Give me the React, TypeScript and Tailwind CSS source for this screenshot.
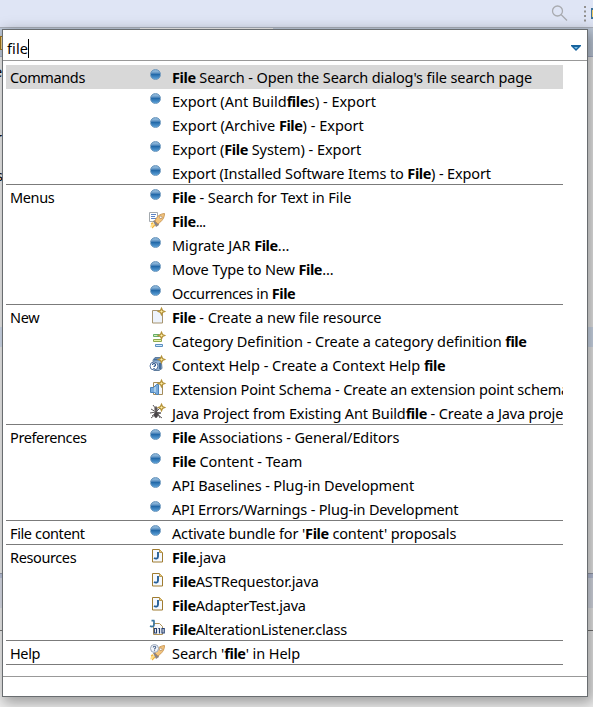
import React from "react";

type IconName = "dot" | "rocket" | "helpRocket" | "newFile" | "category" | "context" | "schema" | "ant" | "java" | "class";
type Item = { icon: IconName; text: string; track?: string };
type Group = { name: string; items: Item[] };

// Text between asterisks is the matched part and is drawn bold.
const groups: Group[] = [
  { name: "Commands", items: [
    { icon: "dot", text: "*File* Search - Open the Search dialog's file search page", track: "tracking-[-0.105px]" },
    { icon: "dot", text: "Export (Ant Build*file*s) - Export", track: "tracking-[-0.010px]" },
    { icon: "dot", text: "Export (Archive *File*) - Export", track: "tracking-[0.010px]" },
    { icon: "dot", text: "Export (*File* System) - Export", track: "tracking-[-0.060px]" },
    { icon: "dot", text: "Export (Installed Software Items to *File*) - Export", track: "tracking-[-0.125px]" },
  ] },
  { name: "Menus", items: [
    { icon: "dot", text: "*File* - Search for Text in File", track: "tracking-[-0.040px]" },
    { icon: "rocket", text: "*File*...", track: "tracking-[-0.600px]" },
    { icon: "dot", text: "Migrate JAR *File*...", track: "tracking-[-0.060px]" },
    { icon: "dot", text: "Move Type to New *File*...", track: "tracking-[-0.140px]" },
    { icon: "dot", text: "Occurrences in *File*", track: "tracking-[-0.380px]" },
  ] },
  { name: "New", items: [
    { icon: "newFile", text: "*File* - Create a new file resource", track: "tracking-[-0.090px]" },
    { icon: "category", text: "Category Definition - Create a category definition *file*", track: "tracking-[-0.080px]" },
    { icon: "context", text: "Context Help - Create a Context Help *file*", track: "tracking-[-0.025px]" },
    { icon: "schema", text: "Extension Point Schema - Create an extension point schema", track: "tracking-[-0.175px]" },
    { icon: "ant", text: "Java Project from Existing Ant Build*file* - Create a Java project", track: "tracking-[-0.130px]" },
  ] },
  { name: "Preferences", items: [
    { icon: "dot", text: "*File* Associations - General/Editors", track: "tracking-[-0.105px]" },
    { icon: "dot", text: "*File* Content - Team", track: "tracking-[-0.050px]" },
    { icon: "dot", text: "API Baselines - Plug-in Development", track: "tracking-[-0.115px]" },
    { icon: "dot", text: "API Errors/Warnings - Plug-in Development", track: "tracking-[-0.175px]" },
  ] },
  { name: "File content", items: [{ icon: "dot", text: "Activate bundle for '*File* content' proposals", track: "tracking-[-0.145px]" }] },
  { name: "Resources", items: [
    { icon: "java", text: "*File*.java" },
    { icon: "java", text: "*File*ASTRequestor.java", track: "tracking-[-0.080px]" },
    { icon: "java", text: "*File*AdapterTest.java" },
    { icon: "class", text: "*File*AlterationListener.class" },
  ] },
  { name: "Help", items: [{ icon: "helpRocket", text: "Search '*file*' in Help", track: "tracking-[-0.080px]" }] },
];

const Spark = () => (
  <path d="M12.500 .300l1 2.200 2.200 1-2.200 1-1 2.200-1-2.200-2.200-1 2.200-1z" fill="#fff0a8" stroke="#b5933c" strokeWidth="1.300" />
);

const Rocket = () => (
  <g>
    <path d="M1 15.500l2-6 4 4z" fill="#ffdf8c" />
    <path d="M4 9l4-2 2 6-3 2z" fill="#8c8583" />
    <path d="M6 9c2-5 5-7 9.500-7.500C15.500 6 13 9 9 12z" fill="#f4c57d" stroke="#c49250" strokeWidth=".9" />
    <circle cx="11.800" cy="5.300" r="1.300" fill="#fff" stroke="#a47c55" strokeWidth=".7" />
    <path d="M2 12l2-1m-1 5l3-3" stroke="#efb33c" strokeWidth="1.200" />
  </g>
);

function Icon({ name }: { name: IconName }) {
  if (name === "dot") {
    return <span className="mb-[5px] ml-0.5 size-[11px] rounded-full border border-[#6a96bd] bg-linear-to-b from-[#86b1d6] from-20% via-[#246aa9] via-50% to-[#5aa0d8]" />;
  }
  return (
    <svg className="mb-0.5 ml-px size-4 shrink-0 overflow-visible" viewBox="0 0 16 16" fill="none">
      {name === "rocket" && <><path d="M.5 .5h8v9h-8z" fill="#fff" stroke="#a3a9ae" /><path d="M2 2.500h5M2 4.500h4M2 6.500h5" stroke="#5b83c4" /><Rocket /></>}
      {name === "helpRocket" && <><Rocket /><circle cx="5.500" cy="4.500" r="4" fill="#f4f6fa" stroke="#9ba8ba" /><path d="M4.200 3.500c.1-1.700 2.700-1.500 2.500 0-.1.800-1.200.8-1.200 2M5.500 6.300v1" stroke="#4f6990" strokeWidth="1.100" /></>}
      {name === "newFile" && <><path d="M3.500 2.500h10v12.500h-10z" fill="#edf3fc" stroke="#a7946e" /><Spark /></>}
      {name === "category" && <><path d="M4.500 2.500h6v2h-6z" fill="#d0edbb" stroke="#65ad65" /><path d="M4.500 7.500h8v2h-8z" fill="#e7f4a8" stroke="#8fa84d" /><path d="M6.500 12.500h7v2h-7z" fill="#cfe8ff" stroke="#5a8fc0" /><Spark /></>}
      {name === "context" && <><path d="M4 4l2-2.500h6l1 11-3 2H5z" fill="#91b1d2" stroke="#5f7d9d" /><path d="M5 3.500h6M11 7v6" stroke="#476e9c" strokeWidth="2" /><circle cx="5" cy="10" r="4" fill="#fff" stroke="#5876a2" /><path d="M3.500 9c0-2 3-2 3 0 0 1-1.500 1-1.500 2m0 1v1" stroke="#1d4984" strokeWidth="1.200" /><Spark /></>}
      {name === "schema" && <><path d="M4.500 2.500h9v12h-9z" fill="#f5f8fc" stroke="#a48c5a" /><path d="M1.500 7.500h3l3-3h2v10h-2l-2-2h-4z" fill="#78aadb" stroke="#4b82b9" /><path d="M6 7v5" stroke="#b8d8f2" strokeWidth="1.500" /><Spark /></>}
      {name === "ant" && <><path d="M7 2v12M2 5l5 3-6 1m1 5 5-4M13 14l-5-4 4-1-5-1 4-4M4 1l3 4M3 12l5-4 3 6" stroke="#4e4a4b" strokeWidth=".9" /><ellipse cx="7" cy="5" rx="1.700" ry="2" fill="#5c5759" /><ellipse cx="7" cy="11" rx="2" ry="2.700" fill="#474346" /><Spark /></>}
      {name === "java" && <><path d="M3.500 1.500h7l3 3v9.500h-10z" fill="#f5f9ff" stroke="#a07c30" /><path d="M10.500 1.500v3h3" fill="#e7c97d" stroke="#b99a56" /><path d="M9 4v4.500c0 2.500-2.500 2.500-4 1.500" stroke="#276098" strokeWidth="1.900" /></>}
      {name === "class" && <><path d="M4.500 3.500h6l3 3v8h-9z" fill="#f7f9fc" stroke="#b09357" /><path d="M5 .5v4.500c0 1.500-2 2-4 1M2.500 .7h3" stroke="#3876a1" strokeWidth="1.700" /><path d="M5.300 8.500h2.200v4.500H5.300zM9.300 8.500h1.200v5M13 8.500h2.200v4.500H13z" fill="#fff" stroke="#253f70" strokeWidth="1.200" /></>}
    </svg>
  );
}

function Label({ text, track }: { text: string; track?: string }) {
  return (
    <span className={`pt-0.5 whitespace-pre ${track ?? "tracking-[-0.200px]"}`}>
      {text.split("*").map((part, i) => (i % 2 ? <b key={i} className="font-bold tracking-[-0.400px]">{part}</b> : <span key={i}>{part}</span>))}
    </span>
  );
}

export default function App() {
  return (
    <div className="relative h-[707px] w-[593px] overflow-hidden bg-[#efefef] font-['Noto_Sans','Open_Sans',sans-serif] text-[14.500px] text-black">
      <div className="flex h-[27px] items-center justify-end bg-[#dfe5f5]">
        <svg className="mr-4 size-[17px]" viewBox="0 0 17 17" fill="none" stroke="#a9abb0" strokeWidth="1.300"><circle cx="6.500" cy="6" r="5" /><path d="M10 9.500l6 6" /></svg>
        <svg className="mr-[5px] h-4 w-0.5" viewBox="0 0 2 16" fill="#92918f"><path d="M0 0h2v2H0zM0 4.500h2v2H0zM0 9h2v2H0zM0 13.500h2v2H0z" /></svg>
        <div className="h-[11px] w-0.5 border-y-2 border-l border-[#3d7299] bg-[#edc967]" />
      </div>
      <div className="flex h-[29px] justify-between border-t border-[#abb0bb] bg-[#bfcada]">
        <span className="mt-2 h-3.5 w-0.5 border-y border-l border-[#a3771d] bg-[#f4d794]" />
        <span className="ml-auto mr-80 h-1 w-[133px] bg-[#efefef]" />
      </div>
      <div className="h-[271px] overflow-hidden border-t border-[#a5aec8]">
        <div className="flex h-full w-[3px] flex-col overflow-hidden"><span className="mt-1 -ml-1.5">e</span><span className="mt-11 -ml-1">r</span><span className="mt-4 -ml-1">s</span></div>
      </div>
      <div className="h-5 bg-[#d5e0f0]" />
      <div className="mt-[226px] h-[35px] border-t border-[#999fae] bg-[#dce0ea]"><div className="h-1 bg-[#bdc6df]" /></div>
      <div className="mt-[22px] h-px bg-[#777]" />

      <div className="absolute left-0.5 top-[29px] flex h-[668px] w-[586px] flex-col border border-[#696d70] bg-white shadow-[3px_4px_13px_2px_rgba(0,0,0,0.340)]">
        <div className="flex h-[31px] shrink-0 items-center border-b border-[#999] pl-1">
          <span className="pt-2 tracking-[0.100px]">file</span>
          <span className="mt-1.5 h-[19px] w-px bg-black" />
          <svg className="ml-auto mr-1.5 mt-1.5 h-[6px] w-[10px]" viewBox="0 0 10 6"><path d="M0 0h10v1L5 6 0 1z" fill="#16639e" /><path d="M3 2h4L5 4z" fill="#7fc1e8" /></svg>
        </div>
        <div className="ml-[3px] mt-1 w-[557px]">
          {groups.map((group) => (
            <section key={group.name} className="border-b border-[#7b7b7b]">
              {group.items.map((item, i) => (
                <div key={item.text} className={`flex items-center overflow-hidden pl-1 ${i === group.items.length - 1 ? "h-[23px]" : "h-6"} ${group.name === "Commands" && i === 0 ? "bg-[#d8d8d8]" : ""}`}>
                  <div className="w-[138px] shrink-0 pt-0.5 tracking-[-0.380px]">{i === 0 ? group.name : ""}</div>
                  <div className="flex w-6 shrink-0 items-center"><Icon name={item.icon} /></div>
                  <Label text={item.text} track={item.track} />
                </div>
              ))}
            </section>
          ))}
        </div>
        <div className="mt-auto h-5 border-t border-[#999]" />
      </div>
    </div>
  );
}
